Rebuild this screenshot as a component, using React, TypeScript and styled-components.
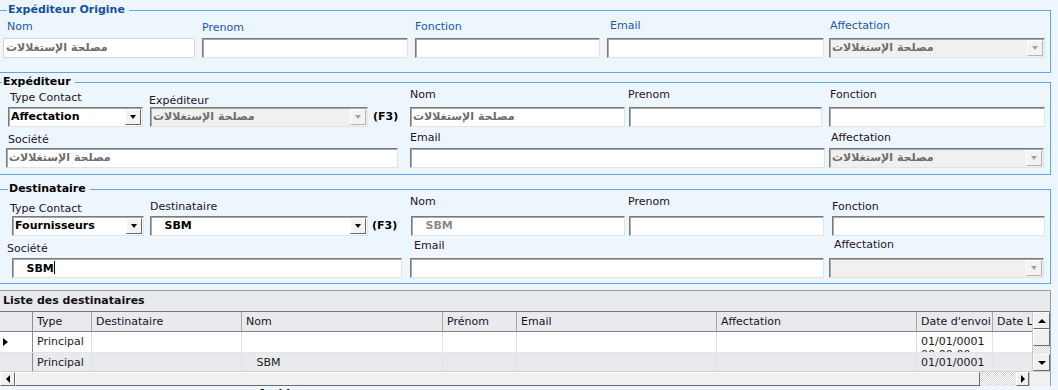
import React from 'react';
import styled, { createGlobalStyle, css } from 'styled-components';

const GlobalStyle = createGlobalStyle`
  html, body {
    margin: 0;
    padding: 0;
    background: #eef6fd;
    overflow: hidden;
  }
  body {
    font-family: 'DejaVu Sans', Verdana, sans-serif;
    font-size: 11px;
  }
`;

const ARABIC = 'مصلحة الإستغلالات';

const Page = styled.div`
  width: 1058px;
  height: 390px;
  overflow: hidden;
  background: #eef6fd;
  color: #222;
`;

const Group = styled.fieldset<{ $mt: number; $pb: number }>`
  margin: ${(p) => p.$mt}px 7px 0 -1px;
  padding: 0 0 ${(p) => p.$pb}px 0;
  border: 1px solid #5aa9ee;
  min-width: 0;
`;

const Legend = styled.legend<{ $blue?: boolean; $x: number }>`
  margin-left: ${(p) => p.$x}px;
  padding: 0 4px 0 1px;
  font-weight: bold;
  font-size: 11px;
  line-height: 12px;
  color: ${(p) => (p.$blue ? '#17509e' : '#000')};
`;

const Row = styled.div<{ $mt?: number }>`
  display: flex;
  align-items: flex-end;
  margin-top: ${(p) => p.$mt ?? 0}px;
`;

const Field = styled.div<{ $w: number; $ml: number }>`
  display: flex;
  flex-direction: column;
  flex-shrink: 0;
  width: ${(p) => p.$w}px;
  margin-left: ${(p) => p.$ml}px;
`;

const Label = styled.div<{ $dx: number; $gap: number; $blue?: boolean }>`
  margin: 0 0 ${(p) => p.$gap}px ${(p) => p.$dx}px;
  line-height: 13px;
  white-space: nowrap;
  color: ${(p) => (p.$blue ? '#1d56ad' : '#241224')};
`;

const Box = styled.div<{ $flat?: boolean; $disabled?: boolean }>`
  box-sizing: border-box;
  height: 20px;
  display: flex;
  align-items: center;
  overflow: hidden;
  background: ${(p) => (p.$disabled ? '#f0f0f0' : '#fff')};
  border: 1px solid;
  border-color: ${(p) => (p.$flat ? '#d6d6d6' : '#7b7b7b #e3e3e3 #e3e3e3 #7b7b7b')};
  ${(p) =>
    !p.$flat &&
    css`
      box-shadow: inset 1px 1px 0 #a9a9a9;
    `}
`;

type Tone = 'arabic' | 'muted' | 'strong';

const toneColor: Record<Tone, string> = {
  arabic: '#6d6d6d',
  muted: '#8a8a8a',
  strong: '#000',
};

const Value = styled.span<{ $tone: Tone }>`
  flex: 1;
  padding-left: 2px;
  font-weight: bold;
  white-space: pre;
  overflow: hidden;
  line-height: 14px;
  color: ${(p) => toneColor[p.$tone]};
`;

const Caret = styled.span`
  display: inline-block;
  width: 1px;
  height: 13px;
  background: #000;
  vertical-align: -2px;
`;

const DropButton = styled.span<{ $disabled?: boolean }>`
  flex-shrink: 0;
  box-sizing: border-box;
  width: 16px;
  height: 16px;
  margin-right: 1px;
  display: flex;
  align-items: center;
  justify-content: center;
  background: #f3f3f3;
  border: 1px solid;
  border-color: ${(p) =>
    p.$disabled ? '#fff #b4b4b4 #b4b4b4 #fff' : '#fff #696969 #696969 #fff'};
  &::after {
    content: '';
    border-style: solid;
    border-width: 4px 3.5px 0;
    border-color: ${(p) => (p.$disabled ? '#a3a3a3' : '#000')} transparent transparent;
  }
`;

const Shortcut = styled.span<{ $w: number; $ml: number }>`
  flex-shrink: 0;
  width: ${(p) => p.$w}px;
  margin-left: ${(p) => p.$ml}px;
  height: 20px;
  line-height: 20px;
  font-weight: bold;
  color: #000;
`;

/* grid */

const ListPanel = styled.section`
  margin: 6px 7px 0 0;
  border-top: 1px solid #9d9d9d;
  border-right: 1px solid #9d9d9d;
  background: #e9eaee;
`;

const ListTitle = styled.div`
  height: 20px;
  line-height: 19px;
  padding-left: 3px;
  font-weight: bold;
  color: #111;
  border-bottom: 1px solid #7c7c7c;
`;

const GridArea = styled.div`
  display: flex;
  height: 59px;
`;

const GridBody = styled.div`
  flex: 1;
  min-width: 0;
  overflow: hidden;
`;

type RowKind = 'head' | 'plain' | 'alt';

const GridRow = styled.div<{ $kind: RowKind }>`
  display: flex;
  height: ${(p) => (p.$kind === 'head' ? 19 : 20)}px;
  background: ${(p) => (p.$kind === 'plain' ? '#fff' : '#e9eaee')};
  border-bottom: 1px solid ${(p) => (p.$kind === 'head' ? '#858585' : '#e4e4e8')};
`;

const Cell = styled.div<{ $w: number; $head?: boolean; $marker?: boolean }>`
  flex-shrink: 0;
  box-sizing: border-box;
  width: ${(p) => p.$w}px;
  padding: 3px 0 0 ${(p) => (p.$marker ? 3 : 4)}px;
  line-height: 13px;
  overflow: hidden;
  white-space: pre-wrap;
  color: ${(p) => (p.$head ? '#1c0f1c' : '#1a1a1a')};
  border-right: 1px solid
    ${(p) => (p.$marker ? '#8f8f8f' : p.$head ? '#a8a8a8' : '#e2e2e6')};
`;

const RowMarker = styled.span`
  display: inline-block;
  margin-top: 3px;
  border-style: solid;
  border-width: 4px 0 4px 5px;
  border-color: transparent transparent transparent #000;
`;

const checker = css`
  background: repeating-conic-gradient(#d6d6d6 0 25%, #fdfdfd 0 50%) 0 0 / 2px 2px;
`;

const raised = css`
  box-sizing: border-box;
  background: #f0f0f0;
  border: 1px solid;
  border-color: #fff #6b6b6b #6b6b6b #fff;
`;

type Dir = 'up' | 'down' | 'left' | 'right';

const arrowBorders: Record<Dir, string> = {
  up: 'border-width: 0 4px 4px; border-color: transparent transparent #000;',
  down: 'border-width: 4px 4px 0; border-color: #000 transparent transparent;',
  left: 'border-width: 4px 4px 4px 0; border-color: transparent #000 transparent transparent;',
  right: 'border-width: 4px 0 4px 4px; border-color: transparent transparent transparent #000;',
};

const ScrollButton = styled.div<{ $dir: Dir; $w: number; $h: number }>`
  ${raised};
  flex-shrink: 0;
  width: ${(p) => p.$w}px;
  height: ${(p) => p.$h}px;
  display: flex;
  align-items: center;
  justify-content: center;
  &::after {
    content: '';
    border-style: solid;
    ${(p) => arrowBorders[p.$dir]}
  }
`;

const VScroll = styled.div`
  ${checker};
  flex-shrink: 0;
  width: 17px;
  display: flex;
  flex-direction: column;
  border-left: 1px solid #c9c9c9;
`;

const VThumb = styled.div`
  ${raised};
  height: 17px;
`;

const Track = styled.div`
  flex: 1;
`;

const HScroll = styled.div`
  display: flex;
  height: 14px;
  border-top: 1px solid #cfcfcf;
  background: #f0f0f0;
`;

const HThumb = styled.div`
  ${raised};
  width: 965px;
  height: 14px;
`;

const HTrack = styled.div`
  ${checker};
  flex: 1;
`;

const Corner = styled.div`
  width: 20px;
  background: #f0f0f0;
  border-left: 1px solid #c9c9c9;
`;

const Footer = styled.div`
  display: flex;
  align-items: flex-start;
`;

const FooterLabel = styled.span`
  margin: 1px 0 0 258px;
  font-weight: bold;
  line-height: 13px;
  color: #000;
`;

const FooterBox = styled.div`
  margin: 4px 0 0 auto;
  width: 160px;
  height: 20px;
  border: 1px solid #a9c9e8;
  background: #e8f1fa;
`;

/* helpers */

type FormFieldProps = {
  label: string;
  w: number;
  ml: number;
  dx?: number;
  gap: number;
  blue?: boolean;
  children: React.ReactNode;
};

const FormField = ({ label, w, ml, dx = 0, gap, blue, children }: FormFieldProps) => (
  <Field $w={w} $ml={ml}>
    <Label $dx={dx} $gap={gap} $blue={blue}>
      {label}
    </Label>
    {children}
  </Field>
);

const TextInput = ({
  value = '',
  tone = 'arabic',
  flat,
  caret,
}: {
  value?: string;
  tone?: Tone;
  flat?: boolean;
  caret?: boolean;
}) => (
  <Box $flat={flat}>
    <Value $tone={tone}>
      {value}
      {caret && <Caret />}
    </Value>
  </Box>
);

const Combo = ({
  value = '',
  tone = 'strong',
  disabled,
}: {
  value?: string;
  tone?: Tone;
  disabled?: boolean;
}) => (
  <Box $disabled={disabled}>
    <Value $tone={tone}>{value}</Value>
    <DropButton $disabled={disabled} />
  </Box>
);

const columns = [
  { title: '', w: 33 },
  { title: 'Type', w: 59 },
  { title: 'Destinataire', w: 150 },
  { title: 'Nom', w: 201 },
  { title: 'Prénom', w: 74 },
  { title: 'Email', w: 200 },
  { title: 'Affectation', w: 200 },
  { title: "Date d'envoi", w: 76 },
  { title: 'Date Lecture', w: 100 },
];

const rows = [
  { kind: 'plain' as RowKind, current: true, cells: ['Principal', '', '', '', '', '', '01/01/0001 00:00:00', ''] },
  { kind: 'alt' as RowKind, current: false, cells: ['Principal', '', '   SBM', '', '', '', '01/01/0001 00:00:00', ''] },
];

export default function App() {
  return (
    <Page>
      <GlobalStyle />

      <Group $mt={4} $pb={14}>
        <Legend $blue $x={7}>
          Expéditeur Origine
        </Legend>
        <Row $mt={3}>
          <FormField label="Nom" w={192} ml={3} dx={4} gap={5} blue>
            <TextInput value={ARABIC} flat />
          </FormField>
          <FormField label="Prenom" w={206} ml={7} gap={4} blue>
            <TextInput />
          </FormField>
          <FormField label="Fonction" w={185} ml={7} gap={5} blue>
            <TextInput />
          </FormField>
          <FormField label="Email" w={217} ml={7} dx={3} gap={6} blue>
            <TextInput />
          </FormField>
          <FormField label="Affectation" w={216} ml={5} dx={1} gap={6} blue>
            <Combo value={ARABIC} tone="arabic" disabled />
          </FormField>
        </Row>
      </Group>

      <Group $mt={3} $pb={6}>
        <Legend $x={2}>Expéditeur</Legend>
        <Row>
          <FormField label="Type Contact" w={135} ml={8} dx={2} gap={3}>
            <Combo value="Affectation" />
          </FormField>
          <FormField label="Expéditeur" w={218} ml={7} dx={-1} gap={0}>
            <Combo value={ARABIC} tone="arabic" disabled />
          </FormField>
          <Shortcut $w={37} $ml={5}>
            (F3)
          </Shortcut>
          <FormField label="Nom" w={215} ml={0} gap={6}>
            <TextInput value={ARABIC} />
          </FormField>
          <FormField label="Prenom" w={193} ml={4} dx={-1} gap={6}>
            <TextInput />
          </FormField>
          <FormField label="Fonction" w={216} ml={7} dx={1} gap={6}>
            <TextInput />
          </FormField>
        </Row>
        <Row $mt={4}>
          <FormField label="Société" w={392} ml={6} dx={2} gap={2}>
            <TextInput value={ARABIC} />
          </FormField>
          <FormField label="Email" w={415} ml={12} gap={4}>
            <TextInput />
          </FormField>
          <FormField label="Affectation" w={215} ml={4} dx={2} gap={4}>
            <Combo value={ARABIC} tone="arabic" disabled />
          </FormField>
        </Row>
      </Group>

      <Group $mt={8} $pb={5}>
        <Legend $x={8}>Destinataire</Legend>
        <Row>
          <FormField label="Type Contact" w={132} ml={12} dx={-2} gap={1}>
            <Combo value="Fournisseurs" />
          </FormField>
          <FormField label="Destinataire" w={218} ml={6} gap={3}>
            <Combo value="   SBM" />
          </FormField>
          <Shortcut $w={39} $ml={4}>
            (F3)
          </Shortcut>
          <FormField label="Nom" w={214} ml={0} dx={-1} gap={8}>
            <TextInput value="   SBM" tone="muted" />
          </FormField>
          <FormField label="Prenom" w={195} ml={4} dx={-1} gap={8}>
            <TextInput />
          </FormField>
          <FormField label="Fonction" w={213} ml={8} gap={3}>
            <TextInput />
          </FormField>
        </Row>
        <Row $mt={2}>
          <FormField label="Société" w={390} ml={12} dx={-5} gap={3}>
            <TextInput value="   SBM" tone="strong" caret />
          </FormField>
          <FormField label="Email" w={414} ml={8} dx={4} gap={6}>
            <TextInput />
          </FormField>
          <FormField label="Affectation" w={215} ml={5} dx={5} gap={7}>
            <Combo disabled />
          </FormField>
        </Row>
      </Group>

      <ListPanel>
        <ListTitle>Liste des destinataires</ListTitle>
        <GridArea>
          <GridBody>
            <GridRow $kind="head">
              {columns.map((c, i) => (
                <Cell key={i} $w={c.w} $head $marker={i === 0}>
                  {c.title}
                </Cell>
              ))}
            </GridRow>
            {rows.map((r, ri) => (
              <GridRow key={ri} $kind={r.kind}>
                <Cell $w={columns[0].w} $marker>
                  {r.current && <RowMarker />}
                </Cell>
                {r.cells.map((v, ci) => (
                  <Cell key={ci} $w={columns[ci + 1].w}>
                    {v}
                  </Cell>
                ))}
              </GridRow>
            ))}
          </GridBody>
          <VScroll>
            <ScrollButton $dir="up" $w={17} $h={17} />
            <VThumb />
            <Track />
            <ScrollButton $dir="down" $w={17} $h={17} />
          </VScroll>
        </GridArea>
        <HScroll>
          <ScrollButton $dir="left" $w={15} $h={14} />
          <HThumb />
          <HTrack />
          <ScrollButton $dir="right" $w={13} $h={14} />
          <Corner />
        </HScroll>
      </ListPanel>

      <Footer>
        <FooterLabel>Archivage</FooterLabel>
        <FooterBox />
      </Footer>
    </Page>
  );
}
